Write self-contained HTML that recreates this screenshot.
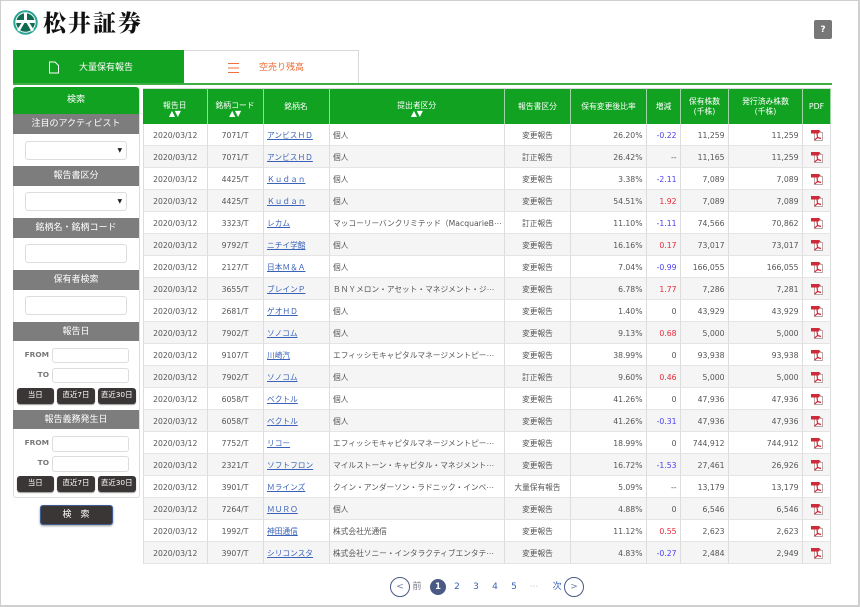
<!DOCTYPE html>
<html lang="ja">
<head>
<meta charset="utf-8">
<title>松井証券</title>
<style>
html,body{margin:0;padding:0;background:#fff}
body{width:860px;height:607px;position:relative;overflow:hidden;font-family:"DejaVu Sans","Noto Sans CJK JP",sans-serif;font-size:7.7px;color:#555;filter:blur(.3px)}
.frame{position:absolute;left:0;top:0;width:857px;height:604px;border:solid #cfcfcf;border-width:1px 2px 2px 1px}
.abs{position:absolute}
.logo{position:absolute;left:43px;top:7px;font-family:"Noto Serif CJK JP","Noto Serif CJK SC",serif;font-weight:900;font-size:23px;line-height:30px;letter-spacing:2px;color:#111;white-space:nowrap}
.tab1{position:absolute;left:13px;top:50px;width:171px;height:33px;background:#12a222;color:#fff}
.tab2{position:absolute;left:184px;top:50px;width:174px;height:32px;background:#fff;border:solid #d8d8d8;border-width:1px 1px 0 0;color:#f0703a}
.tabline{position:absolute;left:13px;top:83px;width:819px;height:2px;background:#3fae45}
.tabtxt{position:absolute;font-size:9px;line-height:12px;white-space:nowrap}
.panel{position:absolute;left:13px;top:87px;width:125px;height:410px;border:1px solid #ddd;border-top:0;border-radius:3px;background:#fff}
.sh{position:absolute;left:13px;width:126px;text-align:center;color:#fff;background:#7d7d7d;font-size:9px;line-height:21px;height:19.5px;overflow:hidden}
.sh.g{background:#12a222;border-radius:3px 3px 0 0;height:27px;line-height:27px;top:87px}
.inp{position:absolute;background:#fff;border:1px solid #ddd;border-radius:3px;box-sizing:border-box}
.car{position:absolute;left:92px;top:5px;font-size:6px;line-height:8px;color:#222}
.lab{position:absolute;width:36px;left:13px;text-align:right;font-size:7.4px;font-weight:bold;color:#777;line-height:12px}
.b{position:absolute;height:15.5px;background:#3a3636;color:#fff;border-radius:3px;text-align:center;font-size:7.4px;line-height:14.5px;box-shadow:0 1px 1px #999;white-space:nowrap}
.search{position:absolute;left:39.5px;top:504.5px;width:73px;height:20px;background:#3a3636;border:1px solid #3f5c95;box-sizing:border-box;border-radius:3px;color:#fff;text-align:center;font-size:9px;line-height:18px;box-shadow:0 1px 2px #999}
.q{position:absolute;left:814px;top:20px;width:18px;height:19px;background:#777;border-radius:2px;color:#fff;text-align:center;font-size:9px;font-weight:bold;line-height:20px}
table{position:absolute;left:143px;top:88px;width:688px;table-layout:fixed;border-collapse:separate;border-spacing:0;box-sizing:border-box}
th{background:#12a222;color:#fff;font-weight:normal;height:36px;padding:0;border-right:1px solid #9fd4a3;border-top:1px solid #ddd;box-sizing:border-box;font-size:7.8px;line-height:9.5px;text-align:center;vertical-align:middle}
th.s{padding-top:6px}
th i{display:block;font-style:normal;font-size:8px;line-height:8px;letter-spacing:-.3px}
td{height:22px;box-sizing:border-box;padding:1px 3.5px 0;border-right:1px solid #ddd;border-bottom:1.5px solid #e4e4e4;white-space:nowrap;overflow:hidden;line-height:19px}
td:first-child{border-left:1px solid #ddd}
tr:nth-child(even) td{background:#f5f5f5}
.c{text-align:center}
.r{text-align:right}
a{color:#3a62b8;text-decoration:underline}
.m{color:#4a3ff0}
.p{color:#e8283a}
td svg{display:block;margin:1px auto 0;width:12px;height:11px}
.pg{position:absolute;top:580px;width:14px;text-align:center;font-size:9px;line-height:14px;color:#3a62b8}
.ci{position:absolute;top:576.5px;width:20px;height:20px;border:1.3px solid #4a5a85;border-radius:50%;box-sizing:border-box;text-align:center;font-size:9px;line-height:18px;color:#6d7ea8;background:#fff}
.cur{position:absolute;left:430px;top:578.5px;width:16px;height:16px;border-radius:50%;background:#4a5a85;color:#fff;text-align:center;font-size:8.6px;font-weight:bold;line-height:16px}
</style>
</head>
<body>
<svg width="0" height="0" style="position:absolute">
<symbol id="pdf" viewBox="0 0 12 11" preserveAspectRatio="none">
<rect x="3.500" y="2.500" width="8" height="8" fill="#fff" stroke="#b9a6a6" stroke-width="1"/>
<rect x="0" y="0" width="8" height="3.500" fill="#cf2a38"/>
<path d="M8 0l2 1.700h-2z" fill="#8c1a24"/>
<path d="M6 3.500l.6 4M6.600 7.500L3.500 10M6.600 7.500l3.500 1" stroke="#cf2a38" stroke-width="1.200" fill="none"/>
</symbol>
</svg>
<div class="frame"></div>

<svg class="abs" style="left:13px;top:10px" width="25" height="25" viewBox="0 0 25 25">
<circle cx="12.500" cy="12.500" r="11.200" fill="#fff" stroke="#2aa392" stroke-width="2"/>
<circle cx="12.500" cy="12.500" r="9.300" fill="#0f6a50"/>
<path d="M2.600 10h19.800v3H2.600zM11 2.800h3V10h-3z" fill="#fff"/>
<path d="M8.500 13l-4.500 7 2.400 1.600 5-8.600zM16.500 13l4.500 7-2.400 1.600-5-8.600z" fill="#fff"/>
</svg>
<div class="logo">松井証券</div>
<div class="q">?</div>

<div class="tab1">
<svg class="abs" style="left:35px;top:11px" width="12" height="13" viewBox="0 0 12 13"><path d="M1.500 1h5.500l3.500 3.500v7.500h-9z" fill="none" stroke="#fff" stroke-width="1"/></svg>
<div class="tabtxt" style="left:66px;top:12px;color:#fff">大量保有報告</div>
</div>
<div class="tab2">
<svg class="abs" style="left:44px;top:12px" width="11" height="10" viewBox="0 0 11 10"><path d="M0 .5h11M0 5h11M0 9.500h11" stroke="#f0703a" stroke-width="1"/></svg>
<div class="tabtxt" style="left:75px;top:11px">空売り残高</div>
</div>
<div class="tabline"></div>

<div class="panel"></div>
<div class="sh g">検索</div>
<div class="sh" style="top:114px">注目のアクティビスト</div>
<div class="inp" style="left:24.500px;top:140.500px;width:102px;height:19px"><span class="car">▼</span></div>
<div class="sh" style="top:166px">報告書区分</div>
<div class="inp" style="left:24.500px;top:192px;width:102px;height:19px"><span class="car">▼</span></div>
<div class="sh" style="top:218px">銘柄名・銘柄コード</div>
<div class="inp" style="left:24.500px;top:244px;width:102px;height:19px"></div>
<div class="sh" style="top:270px">保有者検索</div>
<div class="inp" style="left:24.500px;top:296px;width:102px;height:19px"></div>
<div class="sh" style="top:321.500px">報告日</div>
<div class="lab" style="top:349px">FROM</div>
<div class="inp" style="left:52px;top:347.500px;width:77px;height:15.500px"></div>
<div class="lab" style="top:369px">TO</div>
<div class="inp" style="left:52px;top:367.500px;width:77px;height:15.500px"></div>
<div class="b" style="left:16.500px;top:388px;width:37.500px">当日</div>
<div class="b" style="left:57px;top:388px;width:38px">直近7日</div>
<div class="b" style="left:98px;top:388px;width:37.500px">直近30日</div>
<div class="sh" style="top:409.500px">報告義務発生日</div>
<div class="lab" style="top:437px">FROM</div>
<div class="inp" style="left:52px;top:436px;width:77px;height:15.500px"></div>
<div class="lab" style="top:457px">TO</div>
<div class="inp" style="left:52px;top:456px;width:77px;height:15.500px"></div>
<div class="b" style="left:16.500px;top:476px;width:37.500px">当日</div>
<div class="b" style="left:57px;top:476px;width:38px">直近7日</div>
<div class="b" style="left:98px;top:476px;width:37.500px">直近30日</div>
<div class="search">検　索</div>

<table>
<colgroup><col style="width:64.500px"><col style="width:56px"><col style="width:66px"><col style="width:175.500px"><col style="width:66px"><col style="width:76px"><col style="width:34px"><col style="width:48px"><col style="width:74px"><col style="width:28px"></colgroup>
<thead><tr><th class="s">報告日<i>▲▼</i></th><th class="s">銘柄コード<i>▲▼</i></th><th>銘柄名</th><th class="s">提出者区分<i>▲▼</i></th><th>報告書区分</th><th>保有変更後比率</th><th>増減</th><th>保有株数<br>(千株)</th><th>発行済み株数<br>(千株)</th><th>PDF</th></tr></thead>
<tbody>
<tr><td class="c">2020/03/12</td><td class="c">7071/T</td><td><a>アンビスＨＤ</a></td><td>個人</td><td class="c">変更報告</td><td class="r">26.20%</td><td class="r m">-0.22</td><td class="r">11,259</td><td class="r">11,259</td><td><svg><use href="#pdf"/></svg></td></tr>
<tr><td class="c">2020/03/12</td><td class="c">7071/T</td><td><a>アンビスＨＤ</a></td><td>個人</td><td class="c">訂正報告</td><td class="r">26.42%</td><td class="r">--</td><td class="r">11,165</td><td class="r">11,259</td><td><svg><use href="#pdf"/></svg></td></tr>
<tr><td class="c">2020/03/12</td><td class="c">4425/T</td><td><a>Ｋｕｄａｎ</a></td><td>個人</td><td class="c">変更報告</td><td class="r">3.38%</td><td class="r m">-2.11</td><td class="r">7,089</td><td class="r">7,089</td><td><svg><use href="#pdf"/></svg></td></tr>
<tr><td class="c">2020/03/12</td><td class="c">4425/T</td><td><a>Ｋｕｄａｎ</a></td><td>個人</td><td class="c">変更報告</td><td class="r">54.51%</td><td class="r p">1.92</td><td class="r">7,089</td><td class="r">7,089</td><td><svg><use href="#pdf"/></svg></td></tr>
<tr><td class="c">2020/03/12</td><td class="c">3323/T</td><td><a>レカム</a></td><td>マッコーリーバンクリミテッド（MacquarieB⋯</td><td class="c">訂正報告</td><td class="r">11.10%</td><td class="r m">-1.11</td><td class="r">74,566</td><td class="r">70,862</td><td><svg><use href="#pdf"/></svg></td></tr>
<tr><td class="c">2020/03/12</td><td class="c">9792/T</td><td><a>ニチイ学館</a></td><td>個人</td><td class="c">変更報告</td><td class="r">16.16%</td><td class="r p">0.17</td><td class="r">73,017</td><td class="r">73,017</td><td><svg><use href="#pdf"/></svg></td></tr>
<tr><td class="c">2020/03/12</td><td class="c">2127/T</td><td><a>日本Ｍ＆Ａ</a></td><td>個人</td><td class="c">変更報告</td><td class="r">7.04%</td><td class="r m">-0.99</td><td class="r">166,055</td><td class="r">166,055</td><td><svg><use href="#pdf"/></svg></td></tr>
<tr><td class="c">2020/03/12</td><td class="c">3655/T</td><td><a>ブレインＰ</a></td><td>ＢＮＹメロン・アセット・マネジメント・ジ⋯</td><td class="c">変更報告</td><td class="r">6.78%</td><td class="r p">1.77</td><td class="r">7,286</td><td class="r">7,281</td><td><svg><use href="#pdf"/></svg></td></tr>
<tr><td class="c">2020/03/12</td><td class="c">2681/T</td><td><a>ゲオＨＤ</a></td><td>個人</td><td class="c">変更報告</td><td class="r">1.40%</td><td class="r">0</td><td class="r">43,929</td><td class="r">43,929</td><td><svg><use href="#pdf"/></svg></td></tr>
<tr><td class="c">2020/03/12</td><td class="c">7902/T</td><td><a>ソノコム</a></td><td>個人</td><td class="c">変更報告</td><td class="r">9.13%</td><td class="r p">0.68</td><td class="r">5,000</td><td class="r">5,000</td><td><svg><use href="#pdf"/></svg></td></tr>
<tr><td class="c">2020/03/12</td><td class="c">9107/T</td><td><a>川崎汽</a></td><td>エフィッシモキャピタルマネージメントピー⋯</td><td class="c">変更報告</td><td class="r">38.99%</td><td class="r">0</td><td class="r">93,938</td><td class="r">93,938</td><td><svg><use href="#pdf"/></svg></td></tr>
<tr><td class="c">2020/03/12</td><td class="c">7902/T</td><td><a>ソノコム</a></td><td>個人</td><td class="c">訂正報告</td><td class="r">9.60%</td><td class="r p">0.46</td><td class="r">5,000</td><td class="r">5,000</td><td><svg><use href="#pdf"/></svg></td></tr>
<tr><td class="c">2020/03/12</td><td class="c">6058/T</td><td><a>ベクトル</a></td><td>個人</td><td class="c">変更報告</td><td class="r">41.26%</td><td class="r">0</td><td class="r">47,936</td><td class="r">47,936</td><td><svg><use href="#pdf"/></svg></td></tr>
<tr><td class="c">2020/03/12</td><td class="c">6058/T</td><td><a>ベクトル</a></td><td>個人</td><td class="c">変更報告</td><td class="r">41.26%</td><td class="r m">-0.31</td><td class="r">47,936</td><td class="r">47,936</td><td><svg><use href="#pdf"/></svg></td></tr>
<tr><td class="c">2020/03/12</td><td class="c">7752/T</td><td><a>リコー</a></td><td>エフィッシモキャピタルマネージメントピー⋯</td><td class="c">変更報告</td><td class="r">18.99%</td><td class="r">0</td><td class="r">744,912</td><td class="r">744,912</td><td><svg><use href="#pdf"/></svg></td></tr>
<tr><td class="c">2020/03/12</td><td class="c">2321/T</td><td><a>ソフトフロン</a></td><td>マイルストーン・キャピタル・マネジメント⋯</td><td class="c">変更報告</td><td class="r">16.72%</td><td class="r m">-1.53</td><td class="r">27,461</td><td class="r">26,926</td><td><svg><use href="#pdf"/></svg></td></tr>
<tr><td class="c">2020/03/12</td><td class="c">3901/T</td><td><a>Ｍラインズ</a></td><td>クイン・アンダーソン・ラドニック・インベ⋯</td><td class="c">大量保有報告</td><td class="r">5.09%</td><td class="r">--</td><td class="r">13,179</td><td class="r">13,179</td><td><svg><use href="#pdf"/></svg></td></tr>
<tr><td class="c">2020/03/12</td><td class="c">7264/T</td><td><a>ＭＵＲＯ</a></td><td>個人</td><td class="c">変更報告</td><td class="r">4.88%</td><td class="r">0</td><td class="r">6,546</td><td class="r">6,546</td><td><svg><use href="#pdf"/></svg></td></tr>
<tr><td class="c">2020/03/12</td><td class="c">1992/T</td><td><a>神田通信</a></td><td>株式会社光通信</td><td class="c">変更報告</td><td class="r">11.12%</td><td class="r p">0.55</td><td class="r">2,623</td><td class="r">2,623</td><td><svg><use href="#pdf"/></svg></td></tr>
<tr><td class="c">2020/03/12</td><td class="c">3907/T</td><td><a>シリコンスタ</a></td><td>株式会社ソニー・インタラクティブエンタテ⋯</td><td class="c">変更報告</td><td class="r">4.83%</td><td class="r m">-0.27</td><td class="r">2,484</td><td class="r">2,949</td><td><svg><use href="#pdf"/></svg></td></tr>
</tbody>
</table>

<div class="ci" style="left:390px">&lt;</div>
<div class="pg" style="left:410px;color:#778">前</div>
<div class="cur">1</div>
<div class="pg" style="left:450px">2</div>
<div class="pg" style="left:469px">3</div>
<div class="pg" style="left:488px">4</div>
<div class="pg" style="left:507px">5</div>
<div class="pg" style="left:527px;color:#bbb">⋯</div>
<div class="pg" style="left:550px">次</div>
<div class="ci" style="left:564px">&gt;</div>
</body>
</html>
